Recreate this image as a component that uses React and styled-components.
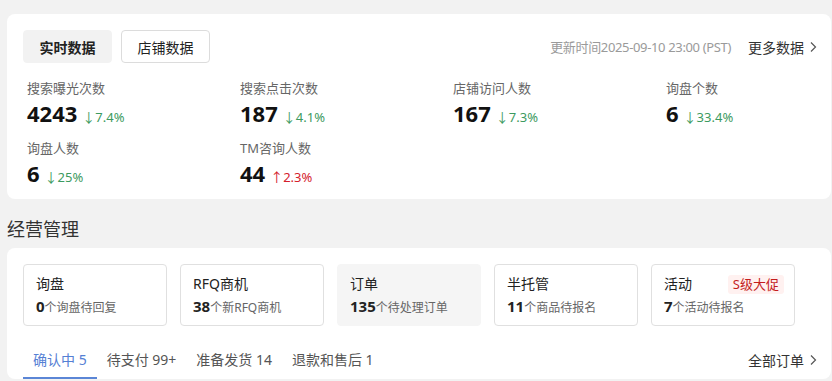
import styled, { createGlobalStyle } from "styled-components";

//#region Styled
  const GlobalStyle = createGlobalStyle`
    html, body {
      margin: 0;
      background: #f2f2f2;
    }
    body {
      font-family: "Noto Sans", "Noto Sans CJK SC", sans-serif;
      color: #333;
    }
  `;

  const Page = styled.main`
    display: flex;
    flex-direction: column;
    padding: 14px 1px 0 7px;
    height: 381px;
    box-sizing: border-box;
    overflow: hidden;
  `;

  const Card = styled.section`
    background: #fff;
    border-radius: 8px;
    padding: ${(p) => p.$padding || "16px"};
  `;

  const HeaderRow = styled.div`
    display: flex;
    align-items: center;
    justify-content: space-between;
  `;

  const TabButtons = styled.div`
    display: flex;
    gap: 9px;
  `;

  const TabButton = styled.button`
    width: 89px;
    height: 33px;
    box-sizing: border-box;
    border-radius: 4px;
    font-family: inherit;
    font-size: 14px;
    font-weight: ${(p) => (p.$active ? 600 : 400)};
    color: #222;
    background: ${(p) => (p.$active ? "#f2f2f2" : "#fff")};
    border: 1px solid ${(p) => (p.$active ? "#f2f2f2" : "#dcdcdc")};
    padding: 0;
    cursor: pointer;
  `;

  const HeaderInfo = styled.div`
    display: flex;
    align-items: center;
    gap: 17px;
  `;

  const UpdateTime = styled.span`
    font-size: 13px;
    letter-spacing: -0.35px;
    color: #9a9a9a;
  `;

  const MoreLink = styled.a`
    display: flex;
    align-items: center;
    gap: 5px;
    font-size: 14px;
    color: #333;
    text-decoration: none;
    cursor: pointer;
  `;

  const MetricGrid = styled.div`
    display: grid;
    grid-template-columns: repeat(3, 213px) 1fr;
    row-gap: 12px;
    padding: 16px 4px 0;
  `;

  const Metric = styled.div`
    display: flex;
    flex-direction: column;
    gap: 2px;
  `;

  const MetricLabel = styled.span`
    font-size: 13px;
    line-height: 18px;
    color: #666;
  `;

  const MetricValueRow = styled.div`
    display: flex;
    align-items: baseline;
    gap: 5px;
    height: 28px;
  `;

  const MetricValue = styled.span`
    font-size: 22px;
    line-height: 28px;
    font-weight: 700;
    color: #111;
  `;

  const Change = styled.span`
    font-size: 13px;
    color: ${(p) => (p.$up ? "#d4202c" : "#3c9a60")};
  `;

  const SectionTitle = styled.h2`
    margin: 18px 0 7px;
    font-size: 18px;
    line-height: 24px;
    font-weight: 400;
    color: #333;
  `;

  const TaskRow = styled.div`
    display: flex;
    gap: 13px;
  `;

  const TaskCard = styled.div`
    width: 144px;
    height: 62px;
    box-sizing: border-box;
    padding: 9px 10px 0 12px;
    border-radius: 4px;
    border: 1px solid ${(p) => (p.$active ? "#f5f5f5" : "#e0e0e0")};
    background: ${(p) => (p.$active ? "#f5f5f5" : "#fff")};
    display: flex;
    flex-direction: column;
    gap: 2px;
  `;

  const TaskHead = styled.div`
    display: flex;
    align-items: center;
    justify-content: space-between;
    height: 20px;
  `;

  const TaskName = styled.span`
    font-size: 14px;
    line-height: 20px;
    color: #222;
  `;

  const Badge = styled.span`
    font-size: 13px;
    line-height: 19px;
    padding: 0 5px;
    border-radius: 3px;
    color: #c41d1d;
    background: #fff1f0;
  `;

  const TaskSub = styled.div`
    display: flex;
    align-items: baseline;
    height: 20px;
  `;

  const TaskCount = styled.span`
    font-size: 15px;
    font-weight: 700;
    color: #222;
  `;

  const TaskText = styled.span`
    font-size: 12px;
    color: #666;
  `;

  const OrderTabsRow = styled.div`
    display: flex;
    align-items: flex-start;
    justify-content: space-between;
    margin-top: 24px;
  `;

  const OrderTabs = styled.div`
    display: flex;
  `;

  const OrderTab = styled.div`
    padding: 0 10px 7px;
    font-size: 14px;
    line-height: 20px;
    color: ${(p) => (p.$active ? "#5580d4" : "#555")};
    border-bottom: 2px solid ${(p) => (p.$active ? "#5b86d6" : "transparent")};
    cursor: pointer;
  `;
//#endregion

function Chevron(){
  return (
    <svg width="8" height="12" viewBox="0 0 8 12" fill="none">
      <polyline points="2,1.5 6.5,6 2,10.5" stroke="#555" strokeWidth="1.2" />
    </svg>
  );
}

const metrics = [
  { label: "搜索曝光次数", value: "4243", change: "7.4%" },
  { label: "搜索点击次数", value: "187", change: "4.1%" },
  { label: "店铺访问人数", value: "167", change: "7.3%" },
  { label: "询盘个数", value: "6", change: "33.4%" },
  { label: "询盘人数", value: "6", change: "25%" },
  { label: "TM咨询人数", value: "44", change: "2.3%", up: true },
];

const tasks = [
  { name: "询盘", count: "0", text: "个询盘待回复" },
  { name: "RFQ商机", count: "38", text: "个新RFQ商机" },
  { name: "订单", count: "135", text: "个待处理订单", active: true },
  { name: "半托管", count: "11", text: "个商品待报名" },
  { name: "活动", count: "7", text: "个活动待报名", badge: "S级大促" },
];

const orderTabs = ["确认中 5", "待支付 99+", "准备发货 14", "退款和售后 1"];

export default function App(){
  return (
    <Page>
      <GlobalStyle/>
      <Card $padding="16px 14px 12px 16px">
        <HeaderRow>
          <TabButtons>
            <TabButton $active>实时数据</TabButton>
            <TabButton>店铺数据</TabButton>
          </TabButtons>
          <HeaderInfo>
            <UpdateTime>更新时间2025-09-10 23:00 (PST)</UpdateTime>
            <MoreLink>更多数据 <Chevron/></MoreLink>
          </HeaderInfo>
        </HeaderRow>
        <MetricGrid>
          {metrics.map((m) => (
            <Metric key={m.label}>
              <MetricLabel>{m.label}</MetricLabel>
              <MetricValueRow>
                <MetricValue>{m.value}</MetricValue>
                <Change $up={m.up}>{m.up ? "↑" : "↓"}{m.change}</Change>
              </MetricValueRow>
            </Metric>
          ))}
        </MetricGrid>
      </Card>

      <SectionTitle>经营管理</SectionTitle>

      <Card $padding="16px 14px 0 16px">
        <TaskRow>
          {tasks.map((t) => (
            <TaskCard key={t.name} $active={t.active}>
              <TaskHead>
                <TaskName>{t.name}</TaskName>
                {t.badge && <Badge>{t.badge}</Badge>}
              </TaskHead>
              <TaskSub>
                <TaskCount>{t.count}</TaskCount>
                <TaskText>{t.text}</TaskText>
              </TaskSub>
            </TaskCard>
          ))}
        </TaskRow>
        <OrderTabsRow>
          <OrderTabs>
            {orderTabs.map((t, i) => (
              <OrderTab key={t} $active={i === 0}>{t}</OrderTab>
            ))}
          </OrderTabs>
          <MoreLink>全部订单 <Chevron/></MoreLink>
        </OrderTabsRow>
      </Card>
    </Page>
  );
}
